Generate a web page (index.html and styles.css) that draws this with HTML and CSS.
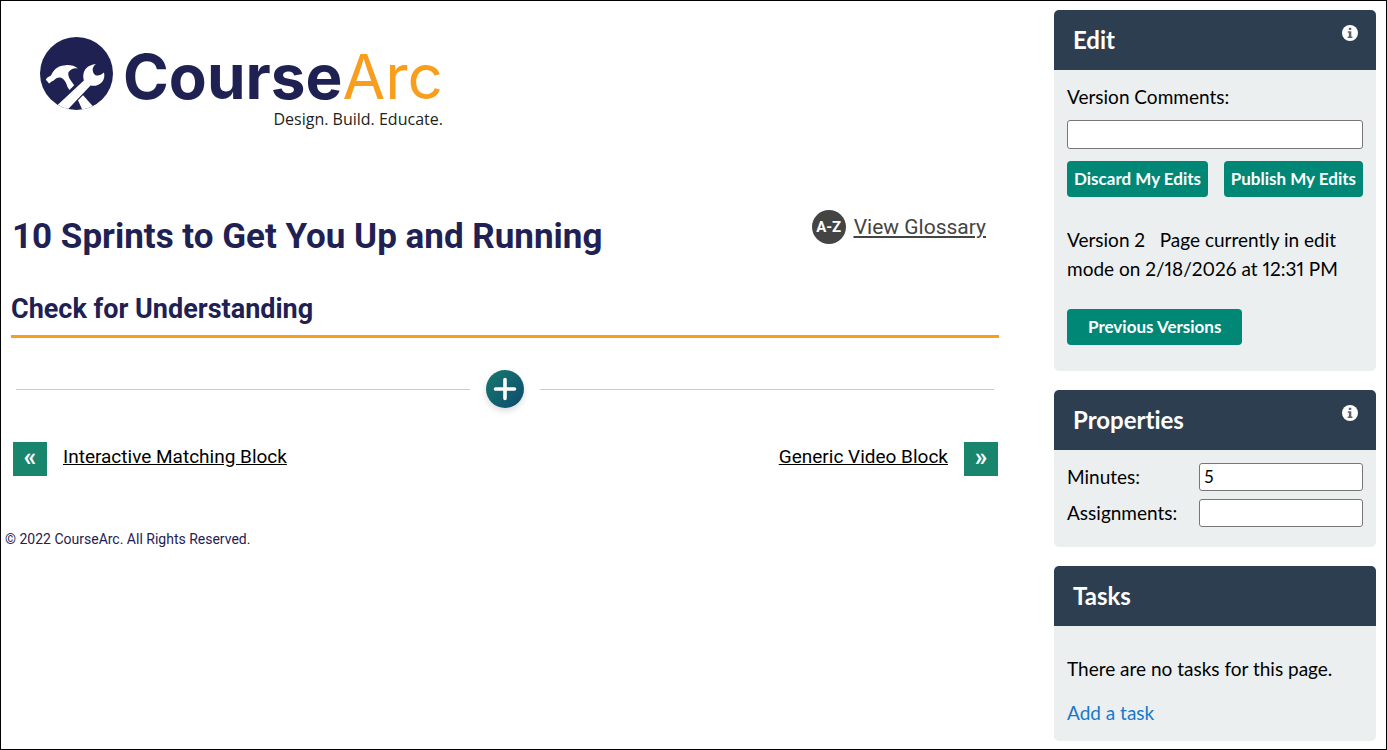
FILE: index.html
```html
<!DOCTYPE html>
<html lang="en">
<head>
<meta charset="utf-8">
<meta name="viewport" content="width=device-width, initial-scale=1">
<title>10 Sprints to Get You Up and Running</title>
<link rel="stylesheet" href="styles.css">
</head>
<body>
<div class="page">
  <main class="content">
    <header class="brand">
      <svg class="brand-mark" viewBox="14 21 218 218" aria-hidden="true">
        <clipPath id="disc"><circle cx="123" cy="130" r="109"/></clipPath>
        <circle cx="123" cy="130" r="109" fill="#1f2153"/>
        <g clip-path="url(#disc)">
          <path fill="#fff" d="M31 148L37 141L46 137L53 125C61 112 75 106 91 105C104 104 118 107 128 115C116 113 106 116 99 126C97 134 100 142 106 151L116 165L102 179L96 170C92 156 86 147 77 143C69 140 62 144 55 151L50 153L41 160Z"/>
          <path fill="#fff" d="M126 207L142 194L172 228L143 244Z"/>
          <path fill="#fff" stroke="#1f2153" stroke-width="7" paint-order="stroke" d="M60 230L145 151C138 127 151 105 181 102C171 110 169 119 174 129C180 139 193 138 205 127C211 150 193 171 165 166L87 248L50 248Z"/>
        </g>
      </svg>
      <div class="brand-text">
        <div class="brand-name"><span class="brand-course">Course</span><span class="brand-arc">Arc</span></div>
        <div class="brand-tagline">Design. Build. Educate.</div>
      </div>
    </header>

    <div class="title-row">
      <h1 class="title">10 Sprints to Get You Up and Running</h1>
      <a class="glossary" href="#glossary"><span class="glossary-badge" aria-hidden="true">A-Z</span><span class="glossary-label">View Glossary</span></a>
    </div>
    <h2 class="subtitle">Check for Understanding</h2>

    <div class="insert">
      <button class="insert-button" type="button" aria-label="Add block">
        <svg viewBox="0 0 38 38" aria-hidden="true"><path d="M19 9.500V28.500M9.500 19H28.500" stroke="#fff" stroke-width="3.600" stroke-linecap="round"/></svg>
      </button>
    </div>

    <nav class="pager" aria-label="Pages">
      <a class="pager-link" href="#previous"><span class="pager-arrow" aria-hidden="true">«</span><span class="pager-label">Interactive Matching Block</span></a>
      <a class="pager-link" href="#next"><span class="pager-label">Generic Video Block</span><span class="pager-arrow" aria-hidden="true">»</span></a>
    </nav>

    <footer class="copyright">© 2022 CourseArc. All Rights Reserved.</footer>
  </main>

  <aside class="sidebar">
    <section class="panel">
      <div class="panel-head">
        <h2 class="panel-title">Edit</h2>
        <button class="info" type="button" aria-label="About editing">
          <svg viewBox="0 0 16 16" aria-hidden="true"><circle cx="8" cy="8" r="8" fill="#fff"/><path fill="#5b6670" d="M6.800 2.700h2.500v2.200H6.800zM5.800 6.200h3.500v5.300h1.100V13H5.700v-1.500h1.200V7.700H5.800z"/></svg>
        </button>
      </div>
      <div class="panel-body edit-body">
        <label for="comments">Version Comments:</label>
        <input class="field comments" id="comments" type="text">
        <div class="actions">
          <button class="button" type="button">Discard My Edits</button>
          <button class="button" type="button">Publish My Edits</button>
        </div>
        <p class="version">Version 2&nbsp;&nbsp; Page currently in edit mode on 2/18/2026 at 12:31 PM</p>
        <button class="button button-wide" type="button">Previous Versions</button>
      </div>
    </section>

    <section class="panel">
      <div class="panel-head">
        <h2 class="panel-title">Properties</h2>
        <button class="info" type="button" aria-label="About properties">
          <svg viewBox="0 0 16 16" aria-hidden="true"><circle cx="8" cy="8" r="8" fill="#fff"/><path fill="#5b6670" d="M6.800 2.700h2.500v2.200H6.800zM5.800 6.200h3.500v5.300h1.100V13H5.700v-1.500h1.200V7.700H5.800z"/></svg>
        </button>
      </div>
      <div class="panel-body properties">
        <label for="minutes">Minutes:</label>
        <input class="field" id="minutes" type="text" value="5">
        <label for="assignments">Assignments:</label>
        <input class="field" id="assignments" type="text">
      </div>
    </section>

    <section class="panel">
      <div class="panel-head">
        <h2 class="panel-title">Tasks</h2>
      </div>
      <div class="panel-body tasks">
        <p class="tasks-empty">There are no tasks for this page.</p>
        <a class="tasks-add" href="#add-task">Add a task</a>
      </div>
    </section>
  </aside>
</div>
</body>
</html>
```
FILE: styles.css
```css
* {
  box-sizing: border-box;
}

body {
  margin: 0;
  background: #fff;
  color: #000;
  font-family: Roboto, "Liberation Sans", sans-serif;
}

h1, h2, p {
  margin: 0;
}

button {
  border: 0;
  padding: 0;
  font: inherit;
  cursor: pointer;
}

.page {
  display: grid;
  grid-template-columns: minmax(0, 1fr) 322px;
  column-gap: 55px;
  min-height: 100vh;
  padding: 9px 10px 8px;
  border: 1px solid #000;
}

/* Brand */
.brand {
  display: flex;
  align-items: flex-start;
  gap: 10px;
  padding: 27px 0 0 29px;
}

.brand-mark {
  width: 73px;
  height: 73px;
}

.brand-text {
  display: flex;
  flex-direction: column;
}

.brand-name {
  height: 72px;
  font-family: Inter, sans-serif;
  font-size: 62px;
  line-height: 80px;
}

.brand-course {
  color: #1f2153;
  font-weight: 700;
}

.brand-arc {
  color: #f99d1c;
  font-weight: 400;
}

.brand-tagline {
  align-self: flex-end;
  color: #231f20;
  font-family: "Open Sans", sans-serif;
  font-size: 16px;
  line-height: 20px;
}

/* Page heading */
.title-row {
  display: flex;
  justify-content: space-between;
  align-items: flex-start;
  padding: 81px 13px 0 1px;
}

.title {
  color: #1f2153;
  font-size: 35px;
  font-weight: 700;
  line-height: 54px;
}

.glossary {
  display: flex;
  align-items: center;
  gap: 8px;
  color: #444;
  font-size: 21px;
  line-height: 34px;
}

.glossary-badge {
  width: 34px;
  height: 34px;
  border-radius: 50%;
  background: #444;
  color: #fff;
  font-size: 15px;
  font-weight: 700;
  text-align: center;
}

.glossary-label {
  text-decoration: underline;
}

.subtitle {
  margin-top: 23px;
  padding-bottom: 4px;
  border-bottom: 3px solid #f99d1c;
  color: #1f2153;
  font-size: 27px;
  font-weight: 700;
  line-height: 44px;
}

/* Block inserter */
.insert {
  display: flex;
  align-items: center;
  gap: 16px;
  margin-top: 32px;
  padding: 0 5px;
}

.insert::before,
.insert::after {
  content: "";
  flex: 1;
  height: 1px;
  background: #ccc;
}

.insert-button {
  width: 38px;
  height: 38px;
  border-radius: 50%;
  background: linear-gradient(135deg, #177a6c, #0d4a70);
  box-shadow: 0 3px 6px rgba(0, 0, 0, 0.15);
}

.insert-button svg,
.info svg {
  display: block;
  width: 100%;
  height: 100%;
}

/* Pager */
.pager {
  display: flex;
  justify-content: space-between;
  margin-top: 34px;
  padding: 0 1px 0 2px;
}

.pager-link {
  display: flex;
  gap: 16px;
  color: #000;
  font-size: 19px;
  line-height: 30px;
  text-decoration: none;
}

.pager-arrow {
  width: 34px;
  height: 34px;
  background: #18856c;
  color: #fff;
  font-size: 25px;
  font-weight: 700;
  line-height: 32px;
  text-align: center;
}

.pager-label {
  text-decoration: underline;
}

.copyright {
  margin: 53px 0 0 -6px;
  color: #1f2153;
  font-size: 14px;
  line-height: 20px;
}

/* Sidebar */
.sidebar {
  display: flex;
  flex-direction: column;
  gap: 19px;
  font-family: Lato, sans-serif;
  font-size: 19px;
  font-variant-ligatures: none;
  font-variant-numeric: proportional-nums;
  line-height: 29px;
}

.panel {
  overflow: hidden;
  border-radius: 5px;
  background: #ebeff0;
}

.panel-head {
  display: flex;
  justify-content: space-between;
  align-items: flex-start;
  padding: 15px 18px 15px 19px;
  background: #2d3e50;
}

.panel-title {
  color: #fff;
  font-size: 24px;
  font-weight: 700;
  line-height: 30px;
}

.info {
  width: 16px;
  height: 16px;
  background: none;
}

.panel-body {
  padding: 13px;
}

.edit-body {
  padding: 12px 13px 26px;
}

.field {
  width: 100%;
  height: 28px;
  padding: 0 4px 2px;
  border: 1px solid #767676;
  border-radius: 3px;
  background: #fff;
  color: #000;
  font-family: Lato, sans-serif;
  font-size: 17px;
}

.comments {
  display: block;
  height: 29px;
  margin-top: 9px;
}

.actions {
  display: flex;
  justify-content: space-between;
  margin-top: 12px;
}

.button {
  height: 36px;
  padding: 0 7px 2px;
  border-radius: 4px;
  background: #008775;
  color: #fff;
  font-size: 17px;
  font-weight: 700;
}

.version {
  margin: 28px 0 26px;
}

.button-wide {
  padding: 0 21px 2px;
}

.properties {
  display: grid;
  grid-template-columns: 1fr 164px;
  row-gap: 8px;
  padding-bottom: 20px;
}

.properties label {
  line-height: 28px;
}

.tasks {
  padding: 28px 13px 14px;
}

.tasks-empty {
  margin-bottom: 15px;
}

.tasks-add {
  color: #1779c9;
  text-decoration: none;
}
```
